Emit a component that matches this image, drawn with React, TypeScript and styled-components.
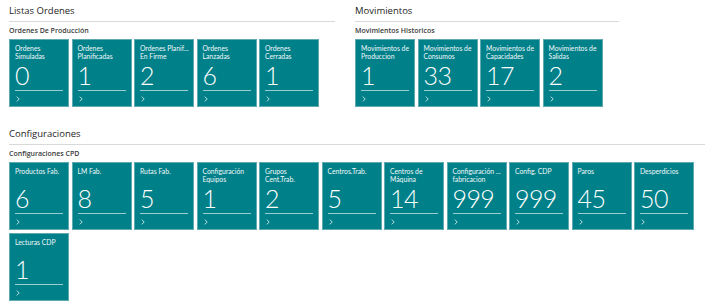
import { createGlobalStyle } from 'styled-components';
import styled from 'styled-components';

const GlobalStyle = createGlobalStyle`
  body {
    margin: 0;
    background: #ffffff;
    font-family: 'Open Sans', 'Noto Sans', sans-serif;
    color: #333333;
  }
`;

const Page = styled.div`
  padding: 4px 3px 0 9px;
  display: flex;
  flex-direction: column;
  gap: 20px;
`;

const Row = styled.div`
  display: flex;
  gap: 20px;
`;

const Section = styled.section<{ $width?: number }>`
  width: ${({ $width }) => ($width ? `${$width}px` : 'auto')};
  flex: ${({ $width }) => ($width ? 'none' : '1')};
`;

const SectionTitle = styled.h2`
  margin: 0;
  font-size: 9.5px;
  font-weight: 400;
  line-height: 14px;
  color: #262626;
  padding-bottom: 3px;
  border-bottom: 1px solid #d9d9d9;
`;

const GroupTitle = styled.h3`
  margin: 4px 0 3px;
  font-size: 7px;
  font-weight: 600;
  line-height: 10px;
  color: #3a3a3a;
`;

const Tiles = styled.div`
  display: flex;
  flex-wrap: wrap;
  gap: 3px 2.5px;
`;

const Tile = styled.a`
  box-sizing: border-box;
  width: 60px;
  height: 68px;
  background: #008089;
  border: 1px solid #5eaab0;
  padding: 5px 2px 0 5px;
  display: flex;
  flex-direction: column;
  color: #ffffff;
  text-decoration: none;
`;

const TileLabel = styled.div`
  height: 15px;
`;

const LabelLine = styled.div`
  font-family: 'Lato', 'Open Sans', sans-serif;
  font-size: 6.8px;
  line-height: 7.5px;
  white-space: nowrap;
  color: #f2f9fa;
`;

const TileValue = styled.div`
  font-family: 'Lato', 'Open Sans', sans-serif;
  font-size: 25px;
  font-weight: 300;
  line-height: 28px;
  letter-spacing: -0.6px;
  margin-top: 1px;
  height: 29px;
`;

const Divider = styled.div`
  height: 1px;
  background: #9ccdd0;
  margin-right: 3px;
`;

const Chevron = styled.svg`
  display: block;
  width: 4px;
  height: 6px;
  margin-top: 5px;
  margin-left: 1px;
`;

type Item = { label: string[]; value: string };

const produccion: Item[] = [
  { label: ['Ordenes', 'Simuladas'], value: '0' },
  { label: ['Ordenes', 'Planificadas'], value: '1' },
  { label: ['Ordenes Planif...', 'En Firme'], value: '2' },
  { label: ['Ordenes', 'Lanzadas'], value: '6' },
  { label: ['Ordenes', 'Cerradas'], value: '1' },
];

const historicos: Item[] = [
  { label: ['Movimientos de', 'Produccion'], value: '1' },
  { label: ['Movimientos de', 'Consumos'], value: '33' },
  { label: ['Movimientos de', 'Capacidades'], value: '17' },
  { label: ['Movimientos de', 'Salidas'], value: '2' },
];

const cpd: Item[] = [
  { label: ['Productos Fab.'], value: '6' },
  { label: ['LM Fab.'], value: '8' },
  { label: ['Rutas Fab.'], value: '5' },
  { label: ['Configuración', 'Equipos'], value: '1' },
  { label: ['Grupos', 'Cent.Trab.'], value: '2' },
  { label: ['Centros.Trab.'], value: '5' },
  { label: ['Centros de', 'Máquina'], value: '14' },
  { label: ['Configuración ...', 'fabricacion'], value: '999' },
  { label: ['Config. CDP'], value: '999' },
  { label: ['Paros'], value: '45' },
  { label: ['Desperdicios'], value: '50' },
  { label: ['Lecturas CDP'], value: '1' },
];

function TileList({ items }: { items: Item[] }) {
  return (
    <Tiles>
      {items.map(item => (
        <Tile key={item.label.join(' ')}>
          <TileLabel>
            {item.label.map(line => (
              <LabelLine key={line}>{line}</LabelLine>
            ))}
          </TileLabel>
          <TileValue>{item.value}</TileValue>
          <Divider />
          <Chevron viewBox="0 0 4 6">
            <polyline points="0.8,0.6 3.2,3 0.8,5.4" fill="none" stroke="#d5eaec" strokeWidth="0.9" />
          </Chevron>
        </Tile>
      ))}
    </Tiles>
  );
}

export default function App() {
  return (
    <>
      <GlobalStyle />
      <Page>
        <Row>
          <Section $width={326}>
            <SectionTitle>Listas Ordenes</SectionTitle>
            <GroupTitle>Ordenes De Producción</GroupTitle>
            <TileList items={produccion} />
          </Section>
          <Section $width={264}>
            <SectionTitle>Movimientos</SectionTitle>
            <GroupTitle>Movimientos Historicos</GroupTitle>
            <TileList items={historicos} />
          </Section>
        </Row>
        <Section>
          <SectionTitle>Configuraciones</SectionTitle>
          <GroupTitle>Configuraciones CPD</GroupTitle>
          <TileList items={cpd} />
        </Section>
      </Page>
    </>
  );
}
